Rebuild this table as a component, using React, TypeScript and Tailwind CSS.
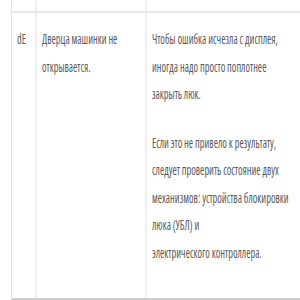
export default function App() {
  const text = "text-[14px] leading-[27.5px] text-[#5a5a5a] whitespace-nowrap [font-stretch:75%]";
  // the source font is a narrow condensed face; squeeze Open Sans to its width
  const squeeze = "origin-top-left scale-x-[0.74]";
  return (
    <div className="w-[300px] h-[300px] overflow-hidden bg-white font-['Open_Sans',sans-serif]">
      <div className="ml-[11px] w-[420px] border-l border-[#e6e6e6]">
        {/* previous row, cut off */}
        <div className="flex h-[11px]">
          <div className="w-[25px] border-r-2 border-[#efefef]" />
          <div className="w-[110px] border-r-2 border-[#efefef]" />
          <div className="flex-1" />
        </div>
        <div className="flex h-[289px] border-t-2 border-t-[#e6e6e6] border-b-2 border-b-[#cfcfcf]">
          <div className={`w-[25px] pl-[5px] pt-[12px] border-r-2 border-[#efefef] ${text}`}>
            <div className={squeeze}>dE</div>
          </div>
          <div className={`w-[110px] pl-[5px] pt-[12px] border-r-2 border-[#efefef] ${text}`}>
            <div className={squeeze}>
              Дверца машинки не
              <br />
              открывается.
            </div>
          </div>
          <div className={`flex-1 pl-[5px] pt-[12px] ${text}`}>
            <div className={squeeze}>
              <p>
                Чтобы ошибка исчезла с дисплея,
                <br />
                иногда надо просто поплотнее
                <br />
                закрыть люк.
              </p>
              <p className="mt-[21px]">
                Если это не привело к результату,
                <br />
                следует проверить состояние двух
                <br />
                механизмов: устройства блокировки
                <br />
                люка (УБЛ) и
                <br />
                электрического контроллера.
              </p>
            </div>
          </div>
        </div>
      </div>
    </div>
  );
}
